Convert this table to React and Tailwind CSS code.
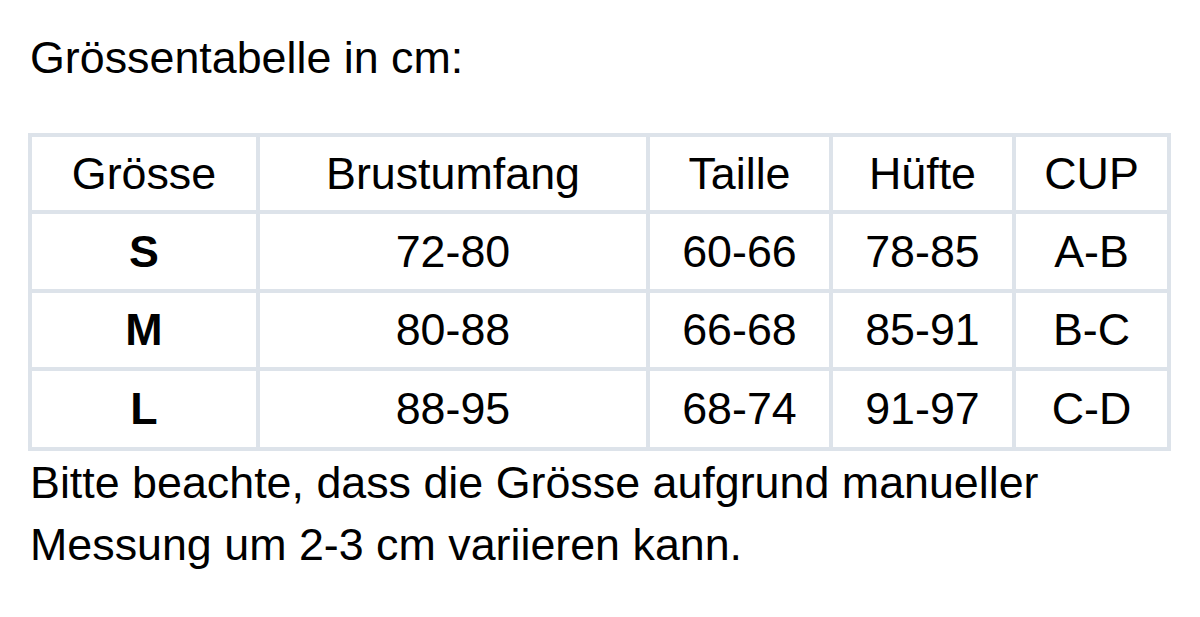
const rows = [
  { size: "S", brust: "72-80", taille: "60-66", huefte: "78-85", cup: "A-B", h: "h-[75px]" },
  { size: "M", brust: "80-88", taille: "66-68", huefte: "85-91", cup: "B-C", h: "h-[74px]" },
  { size: "L", brust: "88-95", taille: "68-74", huefte: "91-97", cup: "C-D", h: "h-[76px]" },
];

const Cell = ({ children, className = "" }) => (
  <div className={`bg-white flex items-center justify-center ${className}`}>{children}</div>
);

const App = () => {
  return (
    <div
      className="w-[1200px] h-[617px] bg-white text-black text-[44.8px] overflow-hidden"
      style={{ fontFamily: '"Liberation Sans", Arial, sans-serif' }}
    >
      <div className="pt-[25px] pl-[30px] leading-[64px]">Grössentabelle in cm:</div>

      <div className="mt-[44px] ml-[28px] w-[1143px] bg-[#dde3ea] p-[4px] grid grid-cols-[224px_386px_179px_179px_151px] gap-[4px]">
        <Cell className="h-[73px]">Grösse</Cell>
        <Cell className="h-[73px]">Brustumfang</Cell>
        <Cell className="h-[73px]">Taille</Cell>
        <Cell className="h-[73px]">Hüfte</Cell>
        <Cell className="h-[73px]">CUP</Cell>

        {rows.map((r) => (
          <div key={r.size} className="contents">
            <Cell className={`${r.h} font-bold`}>{r.size}</Cell>
            <Cell className={r.h}>{r.brust}</Cell>
            <Cell className={r.h}>{r.taille}</Cell>
            <Cell className={r.h}>{r.huefte}</Cell>
            <Cell className={r.h}>{r.cup}</Cell>
          </div>
        ))}
      </div>

      <p className="pl-[30px] leading-[62px]">
        Bitte beachte, dass die Grösse aufgrund manueller
        <br />
        Messung um 2-3 cm variieren kann.
      </p>
    </div>
  );
};

export default App;
